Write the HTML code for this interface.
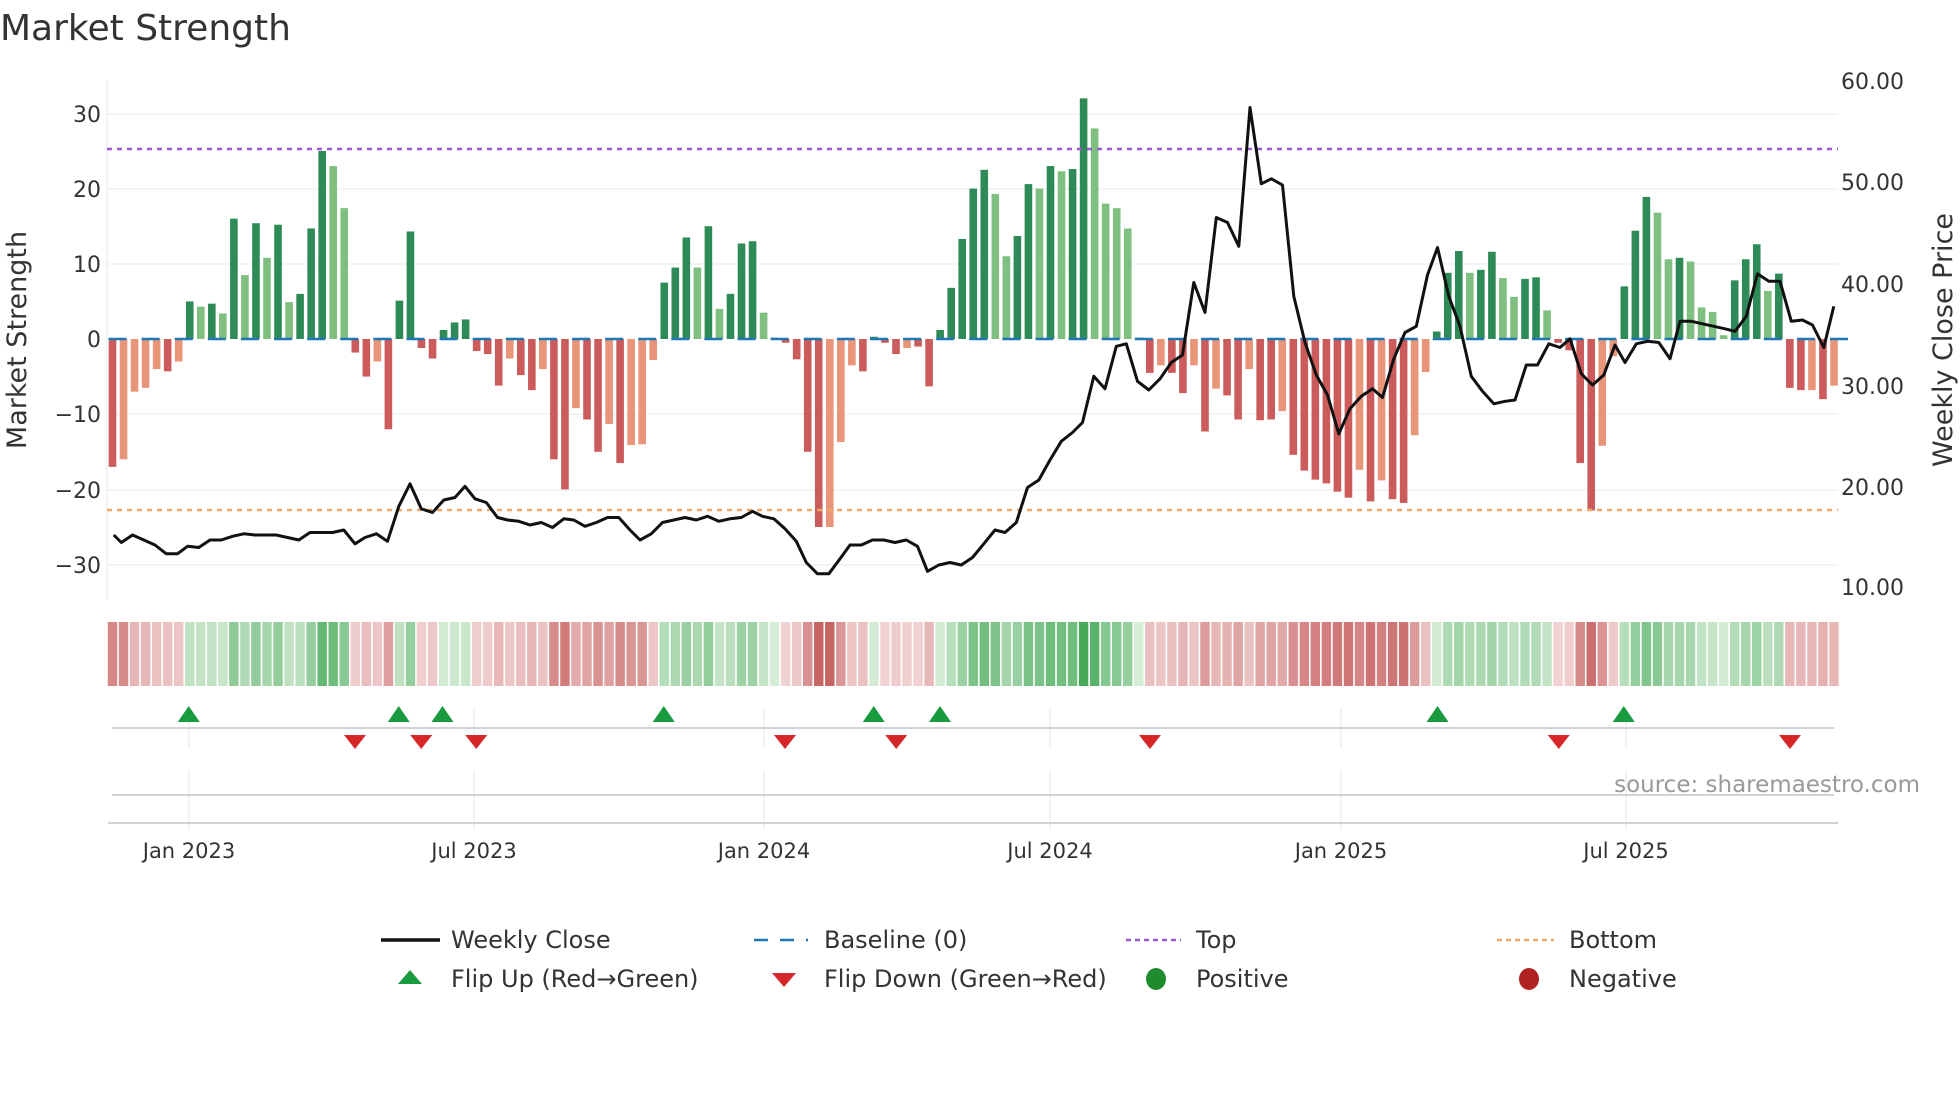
<!DOCTYPE html>
<html><head><meta charset="utf-8">
<style>
html,body{margin:0;padding:0;background:#fff;}
svg{display:block;font-family:"DejaVu Sans","Liberation Sans",sans-serif;}
text{fill:#333;}
</style></head>
<body>
<svg id="s" width="1960" height="1102" viewBox="0 0 1960 1102" xmlns="http://www.w3.org/2000/svg">
<text x="0" y="40" font-size="36">Market Strength</text>
<g stroke="#eef0f4" stroke-width="1.5">
<line x1="107" y1="114" x2="1838" y2="114"/>
<line x1="107" y1="189" x2="1838" y2="189"/>
<line x1="107" y1="264" x2="1838" y2="264"/>
<line x1="107" y1="414" x2="1838" y2="414"/>
<line x1="107" y1="490" x2="1838" y2="490"/>
<line x1="107" y1="565" x2="1838" y2="565"/>
</g>
<line x1="107" y1="80" x2="107" y2="600" stroke="#eef0f4" stroke-width="1.5"/>
<g font-size="22" text-anchor="end">
<text x="101" y="122">30</text><text x="101" y="197">20</text><text x="101" y="272">10</text>
<text x="101" y="347">0</text><text x="101" y="422">−10</text><text x="101" y="498">−20</text><text x="101" y="573">−30</text>
</g>
<g font-size="22">
<text x="1841" y="89">60.00</text><text x="1841" y="190">50.00</text><text x="1841" y="292">40.00</text>
<text x="1841" y="394">30.00</text><text x="1841" y="495">20.00</text><text x="1841" y="595">10.00</text>
</g>
<text font-size="27" transform="translate(26,340) rotate(-90)" text-anchor="middle">Market Strength</text>
<text font-size="27" transform="translate(1952,340) rotate(-90)" text-anchor="middle">Weekly Close Price</text>
<g id="bars"></g>
<line x1="107" y1="149" x2="1838" y2="149" stroke="#9b59d0" stroke-width="2.5" stroke-dasharray="5,5"/>
<line x1="107" y1="510" x2="1838" y2="510" stroke="#f0a868" stroke-width="2.5" stroke-dasharray="5,5"/>
<g id="base"></g>
<polyline id="price" fill="none" stroke="#111" stroke-width="3" stroke-linejoin="round"/>
<g id="heat"></g>
<g stroke="#e6e8ee" stroke-width="1.2" id="vg"></g>
<line x1="112" y1="728" x2="1834" y2="728" stroke="#d0d2d8" stroke-width="2"/>
<line x1="112" y1="795" x2="1834" y2="795" stroke="#d0d2d8" stroke-width="2"/>
<line x1="108" y1="823" x2="1838" y2="823" stroke="#d0d2d8" stroke-width="2"/>
<g id="tri"></g>
<text x="1920" y="792" font-size="23" text-anchor="end" style="fill:#999">source: sharemaestro.com</text>
<g font-size="21" text-anchor="middle">
<text x="189" y="858">Jan 2023</text><text x="474" y="858">Jul 2023</text><text x="764" y="858">Jan 2024</text>
<text x="1050" y="858">Jul 2024</text><text x="1341" y="858">Jan 2025</text><text x="1626" y="858">Jul 2025</text>
</g>
<g font-size="24">
<line x1="381" y1="940" x2="440" y2="940" stroke="#111" stroke-width="3.5"/>
<text x="451" y="948">Weekly Close</text>
<line x1="754" y1="940" x2="808" y2="940" stroke="#1f77b4" stroke-width="2.5" stroke-dasharray="14,12"/>
<text x="824" y="948">Baseline (0)</text>
<line x1="1126" y1="940" x2="1181" y2="940" stroke="#9b59d0" stroke-width="2.5" stroke-dasharray="5,4"/>
<text x="1196" y="948">Top</text>
<line x1="1497" y1="940" x2="1554" y2="940" stroke="#f0a868" stroke-width="2.5" stroke-dasharray="5,4"/>
<text x="1569" y="948">Bottom</text>
<polygon points="410,970 398,984 422,984" fill="#1a9a3e"/>
<text x="451" y="987">Flip Up (Red→Green)</text>
<polygon points="772,973 796,973 784,987" fill="#d62728"/>
<text x="824" y="987">Flip Down (Green→Red)</text>
<ellipse cx="1156" cy="979" rx="10" ry="11" fill="#1f8a2e"/>
<text x="1196" y="987">Positive</text>
<ellipse cx="1529" cy="979" rx="10" ry="11" fill="#b22222"/>
<text x="1569" y="987">Negative</text>
</g>
</svg>
<script>
var NS="http://www.w3.org/2000/svg";
function el(t,a,p){var e=document.createElementNS(NS,t);for(var k in a)e.setAttribute(k,a[k]);document.getElementById(p).appendChild(e);return e;}
var d="-17R -16l -7l -6.5l -4l -4.3R -3l 5D 4.3L 4.7D 3.4L 16D 8.5L 15.4D 10.8L 15.2D 4.9L 6D 14.7D 25D 23L 17.4L -1.8R -5R -3l -12R 5.1D 14.3D -1.2R -2.6R 1.2D 2.2D 2.6D -1.6R -2R -6.2R -2.6l -4.8R -6.8R -4l -16R -20R -9.2l -10.7R -15R -11.3l -16.5R -14.1l -14l -2.8l 7.5D 9.5D 13.5D 9.5L 15D 4L 6D 12.7D 13D 3.5L 0.2L -0.5R -2.7R -15R -25R -25l -13.7l -3.5l -4.3R 0.3D -0.5R -2R -1.2l -1R -6.3R 1.2D 6.8D 13.3D 20D 22.5D 19.3L 11L 13.7D 20.6D 20L 23D 22.3L 22.6D 32D 28L 18L 17.4L 14.7L 0.2L -4.5R -3.5l -4.5R -7.2R -3.5l -12.3R -6.6l -7.5R -10.7R -4l -10.8R -10.7R -9.6l -15.4R -17.5R -18.7R -19.2R -20.3R -21.1R -17.4l -21.6R -18.8l -21.3R -21.8R -12.8l -4.4l 1D 8.8D 11.7D 8.8L 9.2D 11.6D 8.1L 5.6L 8D 8.2D 3.8L -0.5R -1.5R -16.5R -22.8R -14.2l -2.3l 7D 14.4D 18.9D 16.8L 10.6L 10.8D 10.3L 4.2L 3.6L 0.5L 7.8D 10.6D 12.6D 6.4L 8.7D -6.5R -6.8R -6.8l -8R -6.2l".split(" ");
var col={D:"#2e8b57",L:"#7fbf7f",R:"#cc5b5b",l:"#e8957a"};
var n=d.length,step=(1834-112.5)/(n-1);
for(var i=0;i<n;i++){var v=parseFloat(d[i]),c=d[i].slice(-1),x=112.5+step*i;
 var y0=339,y1=339-7.52*v;
 el("rect",{x:x-3.8,y:Math.min(y0,y1),width:7.6,height:Math.max(1,Math.abs(y1-y0)),fill:col[c]},"bars");
 var a=Math.min(1,Math.abs(v)/(v>0?32:25));var f;
 if(v>=0){f="rgb("+Math.round(214-(214-70)*a)+","+Math.round(236-(236-170)*a)+","+Math.round(214-(214-90)*a)+")";}
 else{f="rgb("+Math.round(242-(242-200)*a)+","+Math.round(212-(212-100)*a)+","+Math.round(212-(212-100)*a)+")";}
 el("rect",{x:x-step/2+0.8,y:622,width:step-1.6,height:64,fill:f},"heat");
}
for(var i=0;i<n;i+=3){var x=112.5+step*i;el("line",{x1:x-4,y1:339,x2:x+14,y2:339,stroke:"#1f77b4","stroke-width":2.5},"base");}
var p=[91,428,97,434,106,428,115,432,124,436,133,443,142,443,150,437,159,438,168,432,177,432,186,429,195,427,204,428,213,428,221,428,230,430,239,432,248,426,257,426,266,426,275,424,284,435,292,430,301,427,310,433,319,405,328,387,337,407,346,410,355,400,364,398,372,389,380,399,389,402,398,414,406,416,415,417,424,420,433,418,442,422,451,415,459,416,468,421,477,418,486,414,495,414,504,424,512,432,521,427,530,418,539,416,548,414,557,416,566,413,575,417,584,415,593,414,602,409,610,413,619,415,628,423,637,433,645,450,654,459,663,459,672,447,680,436,689,436,698,432,707,432,716,434,725,432,734,437,742,457,751,452,760,450,769,452,778,446,787,435,796,424,804,426,813,418,822,390,831,384,840,368,849,353,858,346,866,338,875,301,884,311,893,277,901,275,910,305,919,312,928,303,937,290,946,284,955,226,964,250,973,174,982,178,991,197,1000,86,1009,147,1017,143,1026,148,1035,237,1044,274,1053,300,1062,316,1071,347,1080,327,1089,317,1098,311,1106,318,1115,287,1124,266,1133,261,1142,220,1150,198,1159,237,1168,261,1177,301,1186,313,1195,323,1204,321,1212,320,1221,292,1230,292,1239,275,1248,278,1256,271,1265,299,1274,308,1283,300,1292,276,1300,290,1309,275,1318,273,1327,274,1336,287,1344,257,1353,257,1362,259,1371,261,1380,263,1388,265,1397,253,1406,219,1415,225,1424,225,1433,257,1442,256,1450,260,1459,278,1467,245];
var s="";for(var i=0;i<p.length;i+=2)s+=(p[i]*1.25).toFixed(1)+","+(p[i+1]*1.25).toFixed(1)+" ";
document.getElementById("price").setAttribute("points",s);
[189,474,764,1050,1341,1626].forEach(function(x){el("line",{x1:x,y1:708,x2:x,y2:748},"vg");el("line",{x1:x,y1:770,x2:x,y2:830},"vg");});
[151,319,354,531,699,752,1150,1299].forEach(function(x){x*=1.25;el("polygon",{points:x+",706 "+(x-11)+",722 "+(x+11)+",722",fill:"#1a9a3e"},"tri");});
[284,337,381,628,717,920,1247,1432].forEach(function(x){x*=1.25;el("polygon",{points:(x-11)+",735 "+(x+11)+",735 "+x+",749",fill:"#d62728"},"tri");});
</script>
</body></html>
